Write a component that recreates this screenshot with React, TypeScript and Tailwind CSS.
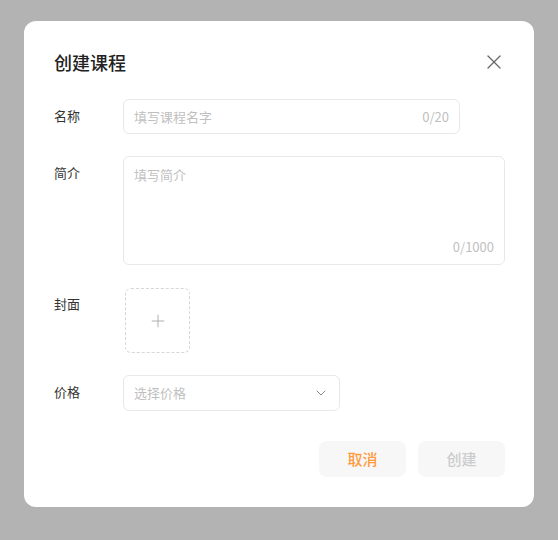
import { X, ChevronDown, Plus } from 'lucide-react'

const font = { fontFamily: '"Noto Sans CJK SC", "Noto Sans", sans-serif' }

function Label({ children }: { children: string }) {
  return <div className="w-[69px] shrink-0 pt-[7px] text-[13px] leading-5 text-[#333]">{children}</div>
}

export default function App() {
  return (
    <div className="min-h-screen w-full bg-[#b3b3b3] pt-[21px] pl-[24px]" style={font}>
      <div className="w-[510px] rounded-[12px] bg-white pl-[30px] pr-[29px] pt-[30px] pb-[30px]">
        {/* Header */}
        <div className="flex h-[22px] items-center justify-between">
          <h1 className="text-[18px] font-medium leading-[22px] text-[#222]">创建课程</h1>
          <button className="-mr-[1px] text-[#666]">
            <X className="h-[24px] w-[24px]" strokeWidth={1.3} />
          </button>
        </div>

        {/* Form */}
        <div className="mt-[26px] flex flex-col gap-[22px]">
          <div className="flex items-start">
            <Label>名称</Label>
            <div className="flex h-[35px] w-[337px] items-center justify-between rounded-[6px] border border-[#e8e8e8] px-[10px] text-[13px]">
              <span className="text-[#bfbfbf]">填写课程名字</span>
              <span className="text-[#bfbfbf]">0/20</span>
            </div>
          </div>

          <div className="flex items-start">
            <Label>简介</Label>
            <div className="flex h-[109px] w-[382px] flex-col justify-between rounded-[6px] border border-[#e8e8e8] px-[10px] pt-[9px] pb-[8px] text-[13px] leading-[18px]">
              <span className="text-[#bfbfbf]">填写简介</span>
              <span className="self-end text-[#bfbfbf]">0/1000</span>
            </div>
          </div>

          <div className="flex items-start">
            <Label>封面</Label>
            <div className="ml-[2px] mt-[1px] flex h-[65px] w-[65px] items-center justify-center rounded-[6px] border border-dashed border-[#d6d6d6] text-[#a8a8a8]">
              <Plus className="h-[20px] w-[20px]" strokeWidth={1.1} />
            </div>
          </div>

          <div className="flex items-start">
            <Label>价格</Label>
            <div className="flex h-[36px] w-[217px] items-center justify-between rounded-[6px] border border-[#e8e8e8] pl-[10px] pr-[10px] text-[13px]">
              <span className="text-[#bfbfbf]">选择价格</span>
              <ChevronDown className="h-[16px] w-[16px] text-[#888]" strokeWidth={1.5} />
            </div>
          </div>
        </div>

        {/* Footer */}
        <div className="mt-[30px] flex justify-end gap-[12px]">
          <button className="h-[36px] w-[87px] rounded-[8px] bg-[#f7f7f7] text-[15px] font-medium text-[#ff9a3e]">
            取消
          </button>
          <button className="h-[36px] w-[87px] rounded-[8px] bg-[#f7f7f7] text-[15px] font-medium text-[#cccccc]">
            创建
          </button>
        </div>
      </div>
    </div>
  )
}
